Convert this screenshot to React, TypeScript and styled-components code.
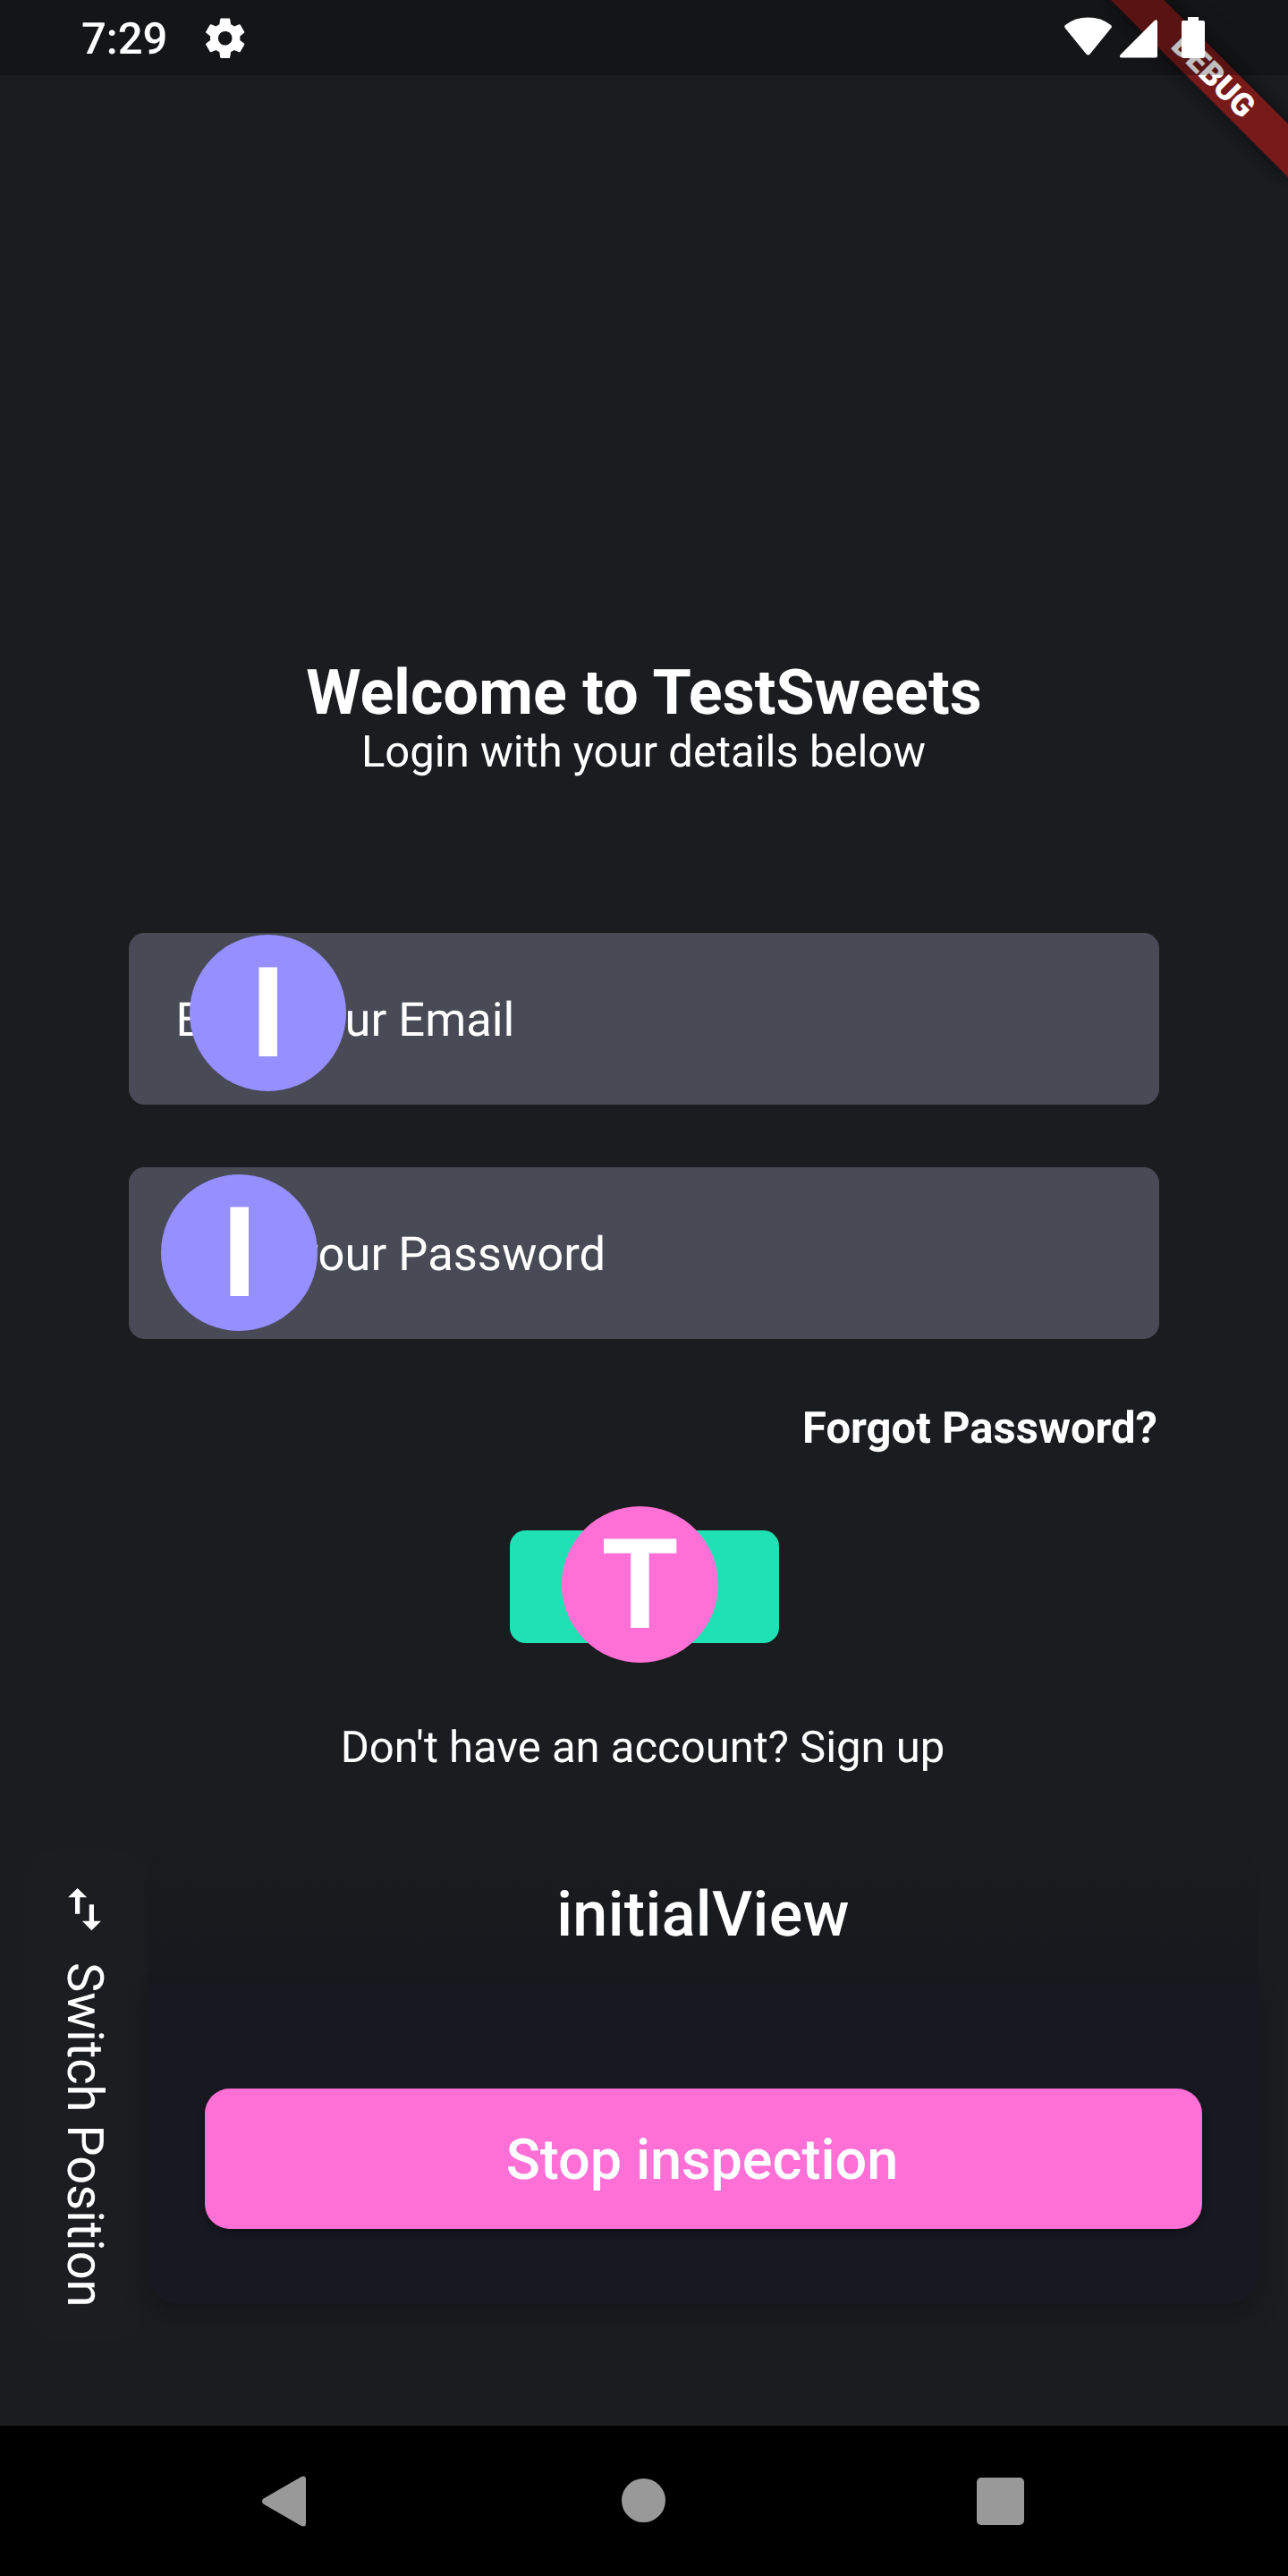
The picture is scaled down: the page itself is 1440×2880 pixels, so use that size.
import React from 'react';
import styled, { createGlobalStyle, css } from 'styled-components';

const GlobalStyle = createGlobalStyle`
  *, *::before, *::after { box-sizing: border-box; }
  body { margin: 0; background: #1b1c1f; }
`;

const Screen = styled.div`
  position: relative;
  display: flex;
  flex-direction: column;
  width: 1440px;
  height: 2880px;
  overflow: hidden;
  background: #1b1c1f;
  color: #fff;
  font-family: Roboto, 'Liberation Sans', sans-serif;
  text-rendering: geometricPrecision;
`;

const StatusBar = styled.header`
  position: relative;
  z-index: 2;
  display: flex;
  align-items: flex-start;
  justify-content: space-between;
  height: 84px;
  padding: 0 93px 0 91px;
  background: rgba(0, 0, 0, 0.25);
`;

const StatusGroup = styled.div<{ $gap: number; $top: number }>`
  display: flex;
  align-items: flex-start;
  gap: ${(p) => p.$gap}px;
  padding-top: ${(p) => p.$top}px;
`;

const Clock = styled.span`
  font-size: 49px;
  line-height: 58px;
  font-weight: 500;
`;

const DebugRibbon = styled.div`
  position: absolute;
  z-index: 1;
  top: 98px;
  left: 1300px;
  width: 280px;
  height: 42px;
  padding-left: 2px;
  transform: rotate(45deg);
  transform-origin: 140px -98px;
  background: #781a1a;
  box-shadow: 0 0 27px rgba(0, 0, 0, 0.5);
  font-size: 35.7px;
  line-height: 42px;
  font-weight: 900;
  text-align: center;
`;

const Login = styled.main`
  display: flex;
  flex-direction: column;
  align-items: center;
  padding: 651px 144px 0;
`;

const Title = styled.h1`
  margin: 0;
  font-size: 70px;
  line-height: 80px;
  font-weight: 700;
  letter-spacing: 0.1px;
`;

const Subtitle = styled.p`
  margin: -1px 1px 176px 0;
  font-size: 49px;
  line-height: 53px;
`;

const Field = styled.div`
  position: relative;
  display: flex;
  align-items: center;
  width: 100%;
  height: 192px;
  margin-bottom: 70px;
  padding: 2px 52.5px 0;
  border-radius: 17.5px;
  background: #484a55;
  font-size: 52.5px;
  line-height: 62px;
`;

const Marker = styled.span<{ $x: number; $y: number; $color: string }>`
  position: absolute;
  left: ${(p) => p.$x}px;
  top: ${(p) => p.$y}px;
  width: 175px;
  height: 175px;
  border-radius: 50%;
  background: ${(p) => p.$color};
  font-size: 140px;
  line-height: 178px;
  font-weight: 700;
  text-align: center;
`;

const ForgotLink = styled.a`
  align-self: flex-end;
  margin: 1px 2px 85px 0;
  font-size: 49px;
  line-height: 58px;
  font-weight: 700;
`;

const LoginButton = styled.div`
  position: relative;
  width: 301px;
  height: 126px;
  margin-bottom: 88px;
  border-radius: 17.5px;
  background: #1fe1b3;
`;

const SignUp = styled.p`
  margin: 0 3px 0 0;
  font-size: 49px;
  line-height: 58px;
`;

const Dock = styled.section`
  display: flex;
  align-items: flex-start;
  gap: 8px;
  margin-top: 83px;
  padding: 0 33px 0 32px;
`;

const SwitchTab = styled.div`
  display: flex;
  flex-direction: column;
  align-items: center;
  width: 125px;
  height: 551px;
  padding-top: 37px;
  border-radius: 35px;
  background: #1c1d21;
`;

const SwitchLabel = styled.span`
  margin-top: 28px;
  writing-mode: vertical-rl;
  font-size: 56px;
  line-height: 66px;
`;

const Panel = styled.div`
  display: flex;
  flex-direction: column;
  flex: 1;
`;

const PanelHead = styled.div`
  height: 152px;
  padding-top: 34px;
  border-radius: 35px 35px 0 0;
  background: linear-gradient(#1a1b1e, #18191e);
`;

const PanelBody = styled.div`
  display: flex;
  flex-direction: column;
  height: 358px;
  padding: 117px 63px 0 64px;
  border-radius: 0 0 35px 35px;
  background: #181821;
  box-shadow: 0 14px 28px rgba(0, 0, 0, 0.22);
`;

const ViewName = styled.h2`
  margin: 0;
  font-size: 70px;
  line-height: 82px;
  font-weight: 500;
  letter-spacing: 0.35px;
  text-align: center;
`;

const StopButton = styled.button`
  height: 157px;
  padding: 0 3px 0 0;
  border: 0;
  border-radius: 28px;
  background: #ff70d6;
  box-shadow: 0 5px 8px rgba(0, 0, 0, 0.3);
  color: inherit;
  font: 500 63px/160px Roboto, 'Liberation Sans', sans-serif;
`;

const NavBar = styled.nav`
  display: flex;
  align-items: center;
  height: 168px;
  margin-top: auto;
  padding: 0 295px 0 293px;
  justify-content: space-between;
  background: #000;
`;

const glyph = css`
  display: block;
  flex: none;
  fill: currentColor;
`;

const Glyph = styled.svg<{ $dx?: number; $dy?: number }>`
  ${glyph}
  margin-left: ${(p) => p.$dx ?? 0}px;
  margin-top: ${(p) => p.$dy ?? 0}px;
`;

const NavGlyph = styled.svg<{ $dx?: number; $dy?: number }>`
  ${glyph}
  margin-left: ${(p) => p.$dx ?? 0}px;
  margin-bottom: ${(p) => p.$dy ?? 0}px;
  color: #999;
`;

const PURPLE = '#968fff';
const PINK = '#ff70d6';

export default function App() {
  return (
    <Screen>
      <GlobalStyle />
      <StatusBar>
        <StatusGroup $gap={38} $top={15}>
          <Clock>7:29</Clock>
          <Glyph width="53.4" height="53.4" viewBox="0 0 24 24" $dy={0.5}>
            <path d="M19.43 12.98c.04-.32.07-.64.07-.98s-.03-.66-.07-.98l2.11-1.65c.19-.15.24-.42.12-.64l-2-3.46c-.12-.22-.39-.3-.61-.22l-2.49 1c-.52-.4-1.08-.73-1.69-.98l-.38-2.65C14.46 2.18 14.25 2 14 2h-4c-.25 0-.46.18-.49.42l-.38 2.65c-.61.25-1.17.59-1.69.98l-2.49-1c-.23-.09-.49 0-.61.22l-2 3.46c-.13.22-.07.49.12.64l2.11 1.65c-.04.32-.07.65-.07.98s.03.66.07.98l-2.11 1.65c-.19.15-.24.42-.12.64l2 3.46c.12.22.39.3.61.22l2.49-1c.52.4 1.08.73 1.69.98l.38 2.65c.03.24.24.42.49.42h4c.25 0 .46-.18.49-.42l.38-2.65c.61-.25 1.17-.59 1.69-.98l2.49 1c.23.09.49 0 .61-.22l2-3.46c.12-.22.07-.49-.12-.64l-2.11-1.65zM12 15.5c-1.93 0-3.5-1.57-3.5-3.5s1.57-3.5 3.5-3.5 3.5 1.57 3.5 3.5-1.57 3.5-3.5 3.5z" />
          </Glyph>
        </StatusGroup>
        <StatusGroup $gap={9} $top={19}>
          <Glyph width="53" height="43" viewBox="0 0 53 43">
            <path d="M1 9Q12 .6 26.5 .6T52 9Q53.5 10.5 52.5 12L28.5 41.5Q26.5 43.5 24.5 41.5L.5 12Q-.5 10.5 1 9Z" />
          </Glyph>
          <Glyph width="42" height="43" viewBox="0 0 42 43" $dy={2.5}>
            <path d="M38.5 1.3Q42-1.5 42 2.5V40.5Q42 42.5 40 42.5H2Q-1.5 42.5 .8 39Z" />
          </Glyph>
          <Glyph width="26" height="46" viewBox="0 0 26 46" $dx={18}>
            <path d="M7 0H19V4H24Q26 4 26 6V44Q26 46 24 46H2Q0 46 0 44V6Q0 4 2 4H7Z" />
          </Glyph>
        </StatusGroup>
      </StatusBar>
      <DebugRibbon>DEBUG</DebugRibbon>

      <Login>
        <Title>Welcome to TestSweets</Title>
        <Subtitle>Login with your details below</Subtitle>
        <Field>
          Enter your Email
          <Marker $x={68.3} $y={1.5} $color={PURPLE}>I</Marker>
        </Field>
        <Field>
          Enter your Password
          <Marker $x={36.3} $y={7.5} $color={PURPLE}>I</Marker>
        </Field>
        <ForgotLink>Forgot Password?</ForgotLink>
        <LoginButton>
          <Marker $x={58.7} $y={-26.7} $color={PINK}>T</Marker>
        </LoginButton>
        <SignUp>Don't have an account? Sign up</SignUp>
      </Login>

      <Dock>
        <SwitchTab>
          <Glyph width="63" height="63" viewBox="0 0 24 24">
            <path d="M16 17.01V10h-2v7.01h-3L15 21l4-3.99h-3zM9 3L5 6.99h3V14h2V6.99h3L9 3z" />
          </Glyph>
          <SwitchLabel>Switch Position</SwitchLabel>
        </SwitchTab>
        <Panel>
          <PanelHead>
            <ViewName>initialView</ViewName>
          </PanelHead>
          <PanelBody>
            <StopButton>Stop inspection</StopButton>
          </PanelBody>
        </Panel>
      </Dock>

      <NavBar>
        <NavGlyph width="49" height="57" viewBox="0 0 49 57">
          <path d="M1.5 25.5L43 1.5Q49-1.5 49 4V53Q49 58.5 43 55.5L1.5 31.5Q-1.5 28.5 1.5 25.5Z" />
        </NavGlyph>
        <NavGlyph width="49" height="49" viewBox="0 0 49 49" $dx={4} $dy={1}>
          <circle cx="24.5" cy="24.5" r="24.5" />
        </NavGlyph>
        <NavGlyph width="53" height="53" viewBox="0 0 53 53">
          <rect width="53" height="53" rx="5" />
        </NavGlyph>
      </NavBar>
    </Screen>
  );
}
